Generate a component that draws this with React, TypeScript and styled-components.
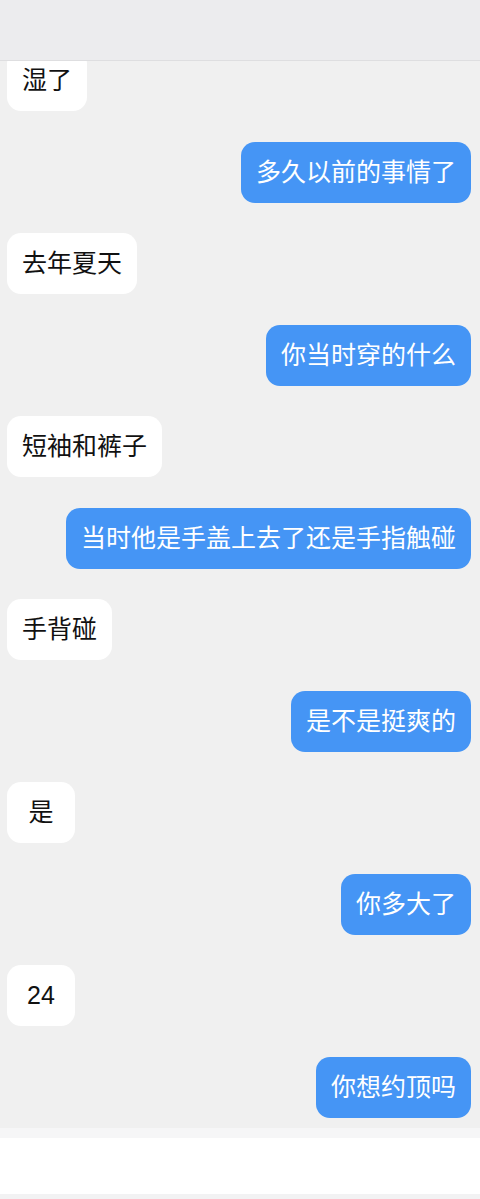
import styled, { createGlobalStyle } from "styled-components";

const GlobalStyle = createGlobalStyle`
  html, body {
    margin: 0;
    padding: 0;
    background: #f0f0f0;
  }
  * {
    box-sizing: border-box;
  }
`

type Msg = { me: boolean; text: string }

const messages: Msg[] = [
  { me: false, text: "湿了" },
  { me: true, text: "多久以前的事情了" },
  { me: false, text: "去年夏天" },
  { me: true, text: "你当时穿的什么" },
  { me: false, text: "短袖和裤子" },
  { me: true, text: "当时他是手盖上去了还是手指触碰" },
  { me: false, text: "手背碰" },
  { me: true, text: "是不是挺爽的" },
  { me: false, text: "是" },
  { me: true, text: "你多大了" },
  { me: false, text: "24" },
  { me: true, text: "你想约顶吗" },
]

const App = () => {
  return (
    <Page>
      <GlobalStyle />
      <Header />
      <Messages>
        <List>
          {messages.map((m, i) => (
            <Row key={i} $me={m.me}>
              <Bubble $me={m.me}>{m.text}</Bubble>
            </Row>
          ))}
        </List>
      </Messages>
      <InputBar>
        <Divider />
        <InputArea />
        <BottomStrip />
      </InputBar>
    </Page>
  )
}

export default App;

const Page = styled.div`
  width: 480px;
  height: 1199px;
  display: flex;
  flex-direction: column;
  background: #f0f0f0;
  font-family: "Liberation Sans", "Noto Sans CJK SC", sans-serif;
  overflow: hidden;
`
const Header = styled.div`
  flex: none;
  height: 61px;
  background: #ececee;
  border-bottom: 1px solid #dedee0;
  position: relative;
  z-index: 1;
`
const Messages = styled.div`
  flex: none;
  height: 1067px;
  overflow: hidden;
`
const List = styled.div`
  display: flex;
  flex-direction: column;
  gap: 30.5px;
  margin-top: -11px;
  padding: 0 9px 0 7px;
`
const Row = styled.div<{ $me: boolean }>`
  display: flex;
  justify-content: ${(p) => (p.$me ? "flex-end" : "flex-start")};
`
const Bubble = styled.div<{ $me: boolean }>`
  height: 61px;
  min-width: 68px;
  padding: 0 15px;
  display: flex;
  align-items: center;
  justify-content: center;
  border-radius: 14px;
  font-size: 25px;
  line-height: 1;
  white-space: nowrap;
  background: ${(p) => (p.$me ? "#4595f5" : "#ffffff")};
  color: ${(p) => (p.$me ? "#ffffff" : "#111111")};
`
const InputBar = styled.div`
  flex: 1;
  display: flex;
  flex-direction: column;
`
const Divider = styled.div`
  height: 10px;
  background: #f6f6f7;
`
const InputArea = styled.div`
  flex: 1;
  background: #ffffff;
`
const BottomStrip = styled.div`
  height: 5px;
  background: #f2f2f3;
`
